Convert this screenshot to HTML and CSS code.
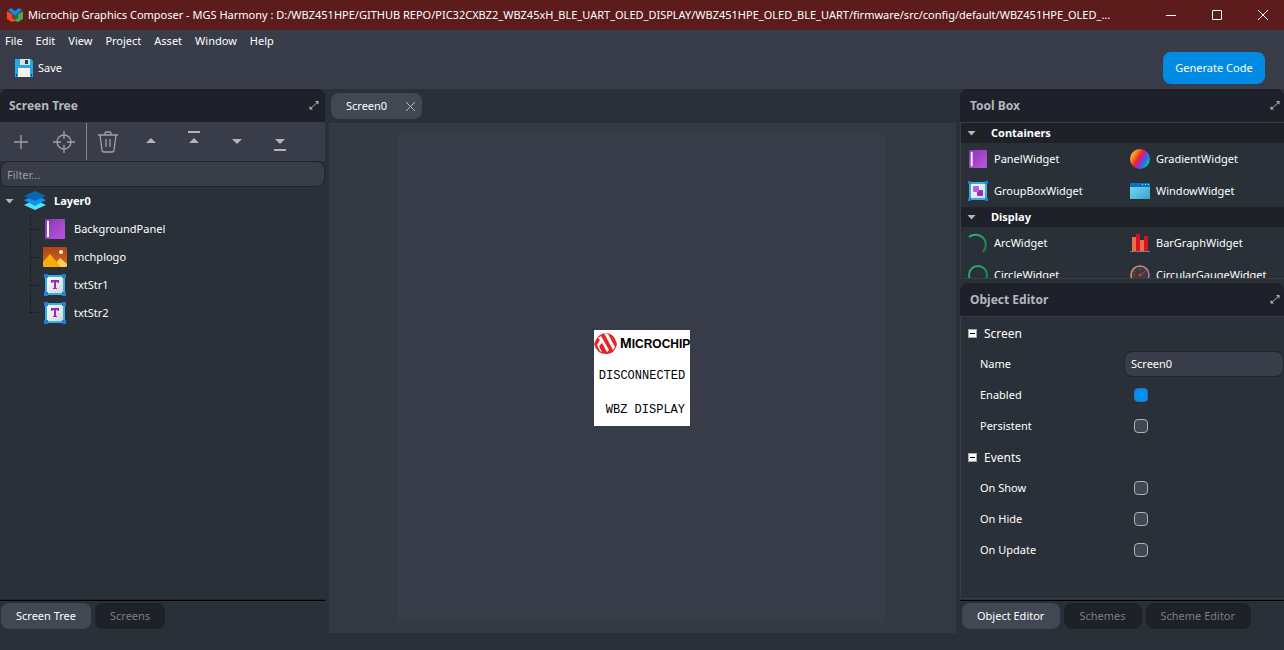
FILE: index.html
```html
<!DOCTYPE html>
<html lang="en">
<head>
<meta charset="utf-8">
<title>Microchip Graphics Composer</title>
<link rel="stylesheet" href="styles.css">
</head>
<body>
<svg class="defs" aria-hidden="true">
  <defs>
    <linearGradient id="purple" x1="0" y1="0" x2="1" y2="1"><stop offset="0" stop-color="#8a35b4"/><stop offset="1" stop-color="#bb55e0"/></linearGradient>
    <linearGradient id="paper" x1="0" y1="0" x2="1" y2="1"><stop offset="0" stop-color="#fff"/><stop offset="1" stop-color="#cfd2d4"/></linearGradient>
    <linearGradient id="rainbow" x1="0" y1="0.2" x2="1" y2="0.8"><stop offset="0.05" stop-color="#ffc51e"/><stop offset="0.25" stop-color="#fb7a1c"/><stop offset="0.42" stop-color="#ee2430"/><stop offset="0.58" stop-color="#a02ec4"/><stop offset="0.75" stop-color="#1878ee"/><stop offset="0.92" stop-color="#23b87c"/></linearGradient>
    <linearGradient id="sky" x1="0" y1="0" x2="1" y2="1"><stop offset="0" stop-color="#80dcf6"/><stop offset="1" stop-color="#35a4cc"/></linearGradient>
    <linearGradient id="rust" x1="0" y1="0" x2="0" y2="1"><stop offset="0" stop-color="#ae4415"/><stop offset="1" stop-color="#d06c1e"/></linearGradient>
    <linearGradient id="ring" x1="0" y1="0" x2="1" y2="0"><stop offset="0" stop-color="#f58a4c"/><stop offset="1" stop-color="#b87aa8"/></linearGradient>
    <linearGradient id="green" x1="0" y1="0" x2="1" y2="1"><stop offset="0" stop-color="#2bb673"/><stop offset="1" stop-color="#128040"/></linearGradient>
    <symbol id="i-panel" viewBox="0 0 20 20"><rect width="20" height="20" rx="1" fill="url(#purple)"/><rect x="2" y="2" width="2" height="16" fill="#fff"/></symbol>
    <symbol id="i-text" viewBox="0 0 22 22"><rect x="2" y="2" width="18" height="18" fill="url(#paper)" stroke="#2fb0e8" stroke-width="2"/><path d="M0 0h4v4H0zM18 0h4v4h-4zM0 18h4v4H0zM18 18h4v4h-4z" fill="#2f78d2"/><path d="M7 6h8v3h-1l-1-1h-1v6h1v1H9v-1h1V8H9L8 9H7z" fill="#9628c8"/></symbol>
    <symbol id="i-group" viewBox="0 0 20 20"><rect x="2" y="2" width="16" height="16" fill="url(#paper)" stroke="#2fb0e8" stroke-width="2"/><path d="M0 0h3v3H0zM17 0h3v3h-3zM0 17h3v3H0zM17 17h3v3h-3z" fill="#2f78d2"/><rect x="9" y="9" width="6" height="6" rx="1" fill="#9030bd"/><rect x="5" y="5" width="6" height="6" rx="1" fill="#bd5ce4"/></symbol>
    <symbol id="i-float" viewBox="0 0 10 10"><path d="m2 7 6-5" fill="none" stroke="#a6a9ae"/><path d="M6 0h3.500v3.500zM.5 5v3.500H4z" fill="#b0b3b8"/></symbol>
  </defs>
</svg>
<div class="app">
  <header class="titlebar">
    <svg class="logo" viewBox="0 0 16 14"><path d="M1 2 4 0l4 3 4-3 3 2-7 6z" fill="#1787ee"/><path d="M0 3l8 5v5l-3 1-5-3z" fill="#ee4b22"/><path d="M16 3 8 8v5l3 1 5-3z" fill="#44ad4e"/><path d="m5 6 3 2 3-2v4l-3 2-3-2z" fill="#202c2c" opacity=".55"/></svg>
    <h1 class="title">Microchip Graphics Composer - MGS Harmony : D:/WBZ451HPE/GITHUB REPO/PIC32CXBZ2_WBZ45xH_BLE_UART_OLED_DISPLAY/WBZ451HPE_OLED_BLE_UART/firmware/src/config/default/WBZ451HPE_OLED_...</h1>
    <div class="window-buttons">
      <button type="button" aria-label="Minimize"><svg viewBox="0 0 12 12"><path d="M1 6.500h10"/></svg></button>
      <button type="button" aria-label="Maximize"><svg viewBox="0 0 12 12"><rect x="1.500" y="1.500" width="9" height="9" rx=".5"/></svg></button>
      <button type="button" aria-label="Close"><svg viewBox="0 0 12 12"><path d="m1 1 10 10M11 1 1 11"/></svg></button>
    </div>
  </header>
  <nav class="menubar">
    <button type="button">File</button><button type="button">Edit</button><button type="button">View</button><button type="button">Project</button><button type="button">Asset</button><button type="button">Window</button><button type="button">Help</button>
  </nav>
  <div class="toolbar">
    <button type="button" class="save"><svg viewBox="0 0 18 18"><path d="M0 0h16l2 2v16H0z" fill="#27a9e6"/><path d="M5 0h10v6H5z" fill="#d9e2e8"/><path d="M10 1h3v4h-3z" fill="#1f3d55"/><path d="M3 9h12v9H3z" fill="#f2f2f2"/><path d="M1 15h1v2H1zM16 15h1v2h-1z" fill="#0d3f60"/></svg>Save</button>
    <button type="button" class="generate">Generate Code</button>
  </div>
  <main class="workspace">
    <section class="dock">
      <div class="dock-head left-head"><h2>Screen Tree</h2><button type="button" aria-label="Float"><svg><use href="#i-float"/></svg></button></div>
      <div class="tree-tools">
        <button type="button" aria-label="Add"><svg viewBox="0 0 24 24"><path d="M12 5v14M5 12h14"/></svg></button>
        <button type="button" aria-label="Locate" class="divided"><svg viewBox="0 0 24 24"><circle cx="12" cy="12" r="7"/><path d="M12 1v8M12 15v8M1 12h8M15 12h8"/></svg></button>
        <button type="button" aria-label="Delete"><svg viewBox="0 0 24 24"><path d="M2 5h20M4 5l2 15q0 2 2 2h8q2 0 2-2l2-15M9 5V3l1-1h4l1 1v2M10 9v8M14 9v8"/></svg></button>
        <button type="button" aria-label="Move up"><svg viewBox="0 0 24 24"><path class="solid" d="m7 13 5-5 5 5z"/></svg></button>
        <button type="button" aria-label="Move to top"><svg viewBox="0 0 24 24"><path class="solid" d="m7 13 5-5 5 5zM6 1h12v2H6z"/></svg></button>
        <button type="button" aria-label="Move down"><svg viewBox="0 0 24 24"><path class="solid" d="m7 9 5 5 5-5z"/></svg></button>
        <button type="button" aria-label="Move to bottom"><svg viewBox="0 0 24 24"><path class="solid" d="m7 9 5 5 5-5zM6 19h12v2H6z"/></svg></button>
      </div>
      <input class="filter" type="text" placeholder="Filter..." aria-label="Filter">
      <div class="tree">
        <div class="layer"><i class="arrow"></i><svg viewBox="0 0 22 20"><path d="m0 14 11-5 11 5-11 5z" fill="#4fe2fb"/><path d="m0 9 11-5 11 5-11 6z" fill="#0b93f2"/><path d="m0 5 11-5 11 5-11 5z" fill="#0868ad"/></svg><strong>Layer0</strong></div>
        <ul>
          <li><svg class="i20"><use href="#i-panel"/></svg>BackgroundPanel</li>
          <li><svg class="i24" viewBox="0 0 24 20"><rect width="24" height="20" rx="1" fill="url(#rust)"/><path d="m11 18 6-7 7 6v2l-1 1H11z" fill="#ffd152"/><path d="m0 15 7-8 11 13H1l-1-1z" fill="#f9ad09"/><circle cx="18" cy="5" r="2" fill="#fff3d6"/></svg>mchplogo</li>
          <li><svg class="i22"><use href="#i-text"/></svg>txtStr1</li>
          <li><svg class="i22"><use href="#i-text"/></svg>txtStr2</li>
        </ul>
      </div>
      <div class="tabs"><button type="button" class="active">Screen Tree</button><button type="button">Screens</button></div>
    </section>

    <section class="editor">
      <div class="editor-tabs"><div class="editor-tab"><span>Screen0</span><button type="button" aria-label="Close Screen0"><svg viewBox="0 0 9 9"><path d="m0 0 9 9M9 0 0 9"/></svg></button></div></div>
      <div class="stage"><div class="canvas"><div class="oled">
        <svg viewBox="0 0 96 28" role="img" aria-label="Microchip"><path d="M0 14Q4 3 12 3t11 11q-2 10-11 10Q3 24 0 14z" fill="#e42526"/><path d="m4 8 3-2 8 14-2 2-5-9-3 3 3 6-2-1-3-6 3-5zM10 3l4 1 7 13-2 3z" fill="#fff"/><text x="26" y="18" class="brand"><tspan class="cap">M</tspan>ICROCHIP</text></svg>
        <p>DISCONNECTED</p><p class="end">WBZ DISPLAY</p>
      </div></div></div>
    </section>

    <section class="dock">
      <div class="dock-head"><h2>Tool Box</h2><button type="button" aria-label="Float"><svg><use href="#i-float"/></svg></button></div>
      <div class="toolbox">
        <h3><i class="arrow"></i>Containers</h3>
        <div class="widgets">
          <div><svg><use href="#i-panel" x="1" y="1" width="18" height="18"/></svg>PanelWidget</div>
          <div><svg viewBox="0 0 20 20"><circle cx="10" cy="10" r="10" fill="url(#rainbow)"/></svg>GradientWidget</div>
          <div><svg><use href="#i-group"/></svg>GroupBoxWidget</div>
          <div><svg viewBox="0 0 20 20"><path d="M0 2h20v16H0z" fill="url(#sky)"/><path d="M0 2h20v4H0z" fill="#0873c6"/><path d="M12 3h1v1h-1zM15 3h1v1h-1zM18 3h1v1h-1z" fill="#a8dcf8"/></svg>WindowWidget</div>
        </div>
        <h3><i class="arrow"></i>Display</h3>
        <div class="widgets">
          <div><svg viewBox="0 0 20 20"><path d="M1 4q4-3 9-2c8 2 10 11 5 17" fill="none" stroke="url(#green)" stroke-width="2"/></svg>ArcWidget</div>
          <div><svg viewBox="0 0 20 20"><path d="M2 4h4v14H2zM10 7h4v11h-4z" fill="#ef6c45"/><path d="M6 1h4v17H6zM14 3h4v15h-4z" fill="#d01524"/><path d="M0 18h20v1H0z" fill="#76808c"/></svg>BarGraphWidget</div>
          <div><svg viewBox="0 0 20 20"><circle cx="10" cy="10" r="9" fill="none" stroke="url(#green)" stroke-width="2"/></svg>CircleWidget</div>
          <div><svg viewBox="0 0 20 20"><circle cx="10" cy="10" r="9" fill="#3b3b40" stroke="url(#ring)" stroke-width="1.500"/><path d="m10 10 6-4" stroke="#d8382e"/><circle cx="10" cy="10" r="1.500" fill="#e23030"/><path d="M10 3v2M4 6l1 1M3 10h2M15 5l1-1" stroke="#626268"/></svg>CircularGaugeWidget</div>
        </div>
      </div>
      <div class="dock-head"><h2>Object Editor</h2><button type="button" aria-label="Float"><svg><use href="#i-float"/></svg></button></div>
      <form class="properties">
        <h3><i class="minus"></i>Screen</h3>
        <div class="prop"><label for="name">Name</label><input id="name" type="text" value="Screen0"></div>
        <div class="prop"><label for="enabled">Enabled</label><input id="enabled" type="checkbox" checked></div>
        <div class="prop"><label for="persistent">Persistent</label><input id="persistent" type="checkbox"></div>
        <h3><i class="minus"></i>Events</h3>
        <div class="prop"><label for="show">On Show</label><input id="show" type="checkbox"></div>
        <div class="prop"><label for="hide">On Hide</label><input id="hide" type="checkbox"></div>
        <div class="prop"><label for="update">On Update</label><input id="update" type="checkbox"></div>
      </form>
      <div class="tabs right-tabs"><button type="button" class="active">Object Editor</button><button type="button">Schemes</button><button type="button">Scheme Editor</button></div>
    </section>
  </main>
</div>
</body>
</html>
```
FILE: styles.css
```css
* { box-sizing: border-box; }
body { margin: 0; background: #2a3037; color: #fff; font: 11px/16px "Noto Sans", "Open Sans", sans-serif; }
button { padding: 0; border: 0; background: none; color: inherit; font: inherit; display: flex; align-items: center; justify-content: center; }
svg { display: block; flex: none; }
h1, h2, h3, p, ul { margin: 0; padding: 0; font: inherit; }
.defs { position: absolute; width: 0; height: 0; }
.app { min-height: 100vh; display: flex; flex-direction: column; padding-bottom: 17px; }

.titlebar { height: 30px; display: flex; align-items: center; background: #5c1c1c; padding-left: 7px; }
.logo { width: 16px; height: 14px; }
.title { flex: 1; min-width: 0; margin-left: 5px; white-space: nowrap; }
.window-buttons { display: flex; gap: 34px; padding-right: 15px; }
.window-buttons button { height: 30px; }
.window-buttons svg { width: 12px; height: 12px; fill: none; stroke: #fff; }

.menubar { display: flex; gap: 13px; height: 22px; align-items: center; padding-left: 5px; background: #383d49; }
.toolbar { height: 37px; display: flex; justify-content: space-between; align-items: flex-start; padding: 0 19px 0 15px; background: #383d49; }
.save { gap: 5px; height: 32px; }
.save svg { width: 18px; height: 18px; }
.generate { width: 102px; height: 32px; border-radius: 8px; background: #008ce4; }

.workspace { flex: 1; display: grid; grid-template-columns: 325px minmax(0, 1fr) 324px; column-gap: 4px; }
.dock { display: flex; flex-direction: column; min-width: 0; }
.dock-head { height: 33px; display: flex; align-items: center; justify-content: space-between; padding: 0 4px 0 10px; background: #1e2129; border-radius: 8px 8px 0 0; color: #b4b8bd; }
.left-head { padding: 0 6px 0 9px; }
.dock-head h2 { font-size: 12px; font-weight: 700; }
.dock-head svg { width: 10px; height: 10px; }

.tree-tools { height: 39px; display: flex; background: #383d49; }
.tree-tools button { width: 43px; height: 37px; margin-top: 1px; padding-right: 2px; }
.tree-tools .divided { width: 44px; border-right: 1px solid #85888e; }
.tree-tools svg { width: 24px; height: 24px; fill: none; stroke: #a0a2a7; stroke-width: 1.3; }
.tree-tools .solid { fill: #b2b4b7; stroke: none; }
.filter { height: 26px; padding: 0 6px; border: 1px solid #20242b; border-radius: 8px; background: #383d49; color: #fff; font: inherit; }
.filter::placeholder { color: #9a9ca2; opacity: 1; }

.arrow { width: 9px; height: 5px; background: #b4b6ba; clip-path: polygon(0 0, 100% 0, 50% 100%); }
.tree { flex: 1; border-bottom: 1px solid #20242a; }
.layer { height: 28px; display: flex; align-items: center; padding-left: 5px; }
.layer svg { width: 22px; height: 20px; margin: 0 8px 0 10px; }
.tree ul { list-style: none; margin-left: 30px; }
.tree li { height: 28px; display: grid; grid-template-columns: 10px 34px auto; justify-content: start; align-items: center; }
.tree li::before { content: ""; width: 10px; height: 28px; border-left: 1px dotted #14171b; background: repeating-linear-gradient(90deg, #14171b 0 1px, transparent 1px 2px) 0 14px / 10px 1px no-repeat; }
.tree li:last-child::before { height: 14px; align-self: start; background-position: 0 13px; }
.tree li svg { justify-self: center; margin-right: 4px; }
.i20 { width: 20px; height: 20px; }
.i22 { width: 22px; height: 22px; }
.i24 { width: 24px; height: 20px; }

.tabs { display: flex; gap: 4px; height: 33px; padding: 2px 1px 4px; border-top: 1px solid #000; }
.right-tabs { padding-left: 2px; }
.tabs button { padding: 0 15px; border-radius: 8px; background: #1e2128; color: #777e8b; white-space: nowrap; }
.right-tabs button { padding: 0 16px 0 15px; }
.tabs .active { background: #424754; color: #fff; }

.editor { display: flex; flex-direction: column; min-width: 0; }
.editor-tabs { height: 34px; padding: 4px 2px; display: flex; }
.editor-tab { display: flex; align-items: center; gap: 19px; padding: 0 7px 0 15px; border-radius: 8px; background: #424754; }
.editor-tab svg { width: 9px; height: 9px; stroke: #b7bac0; }
.stage { flex: 1; display: grid; place-items: center; padding: 11px 12px 11px 11px; background: #343a43; }
.canvas { height: 100%; aspect-ratio: 1; display: grid; place-items: center; background: #373c48; }
.oled { width: 96px; height: 96px; background: #fff; color: #000; font: 12px/14px "Liberation Mono", monospace; text-align: center; }
.oled svg { width: 96px; height: 28px; }
.brand { font: 700 12px "Liberation Sans", sans-serif; }
.cap { font-size: 14px; }
.oled p { margin-top: 11px; }
.oled .end { margin-top: 20px; text-align: right; padding-right: 5px; }

.toolbox { height: 157px; overflow: hidden; border: 1px solid #383e45; border-right: 0; margin-bottom: 4px; }
.toolbox h3 { height: 20px; display: flex; align-items: center; gap: 15px; padding-left: 6px; background: #1e2128; font-weight: 700; }
.widgets { display: grid; grid-template-columns: 1fr 154px; padding-left: 7px; }
.widgets div { height: 32px; display: flex; align-items: center; gap: 6px; white-space: nowrap; }
.widgets svg { width: 20px; height: 20px; }
.properties { flex: 1; border: 1px solid #383e45; border-right: 0; margin-bottom: 1px; }
.properties h3 { height: 31px; display: flex; align-items: center; gap: 7px; padding: 2px 0 0 7px; font-size: 12px; }
.minus { width: 9px; height: 9px; border: 1px solid #a8a8a8; background: linear-gradient(#000, #000) center / 5px 1px no-repeat #fff; }
.prop { height: 31px; display: grid; grid-template-columns: 144px 1fr; align-items: center; padding-left: 19px; }
.prop [type="text"] { width: 100%; height: 26px; border: 1px solid #20242b; border-radius: 8px; padding: 0 6px; background: #383d49; color: #fff; font: inherit; }
.prop [type="checkbox"] { appearance: none; width: 14px; height: 14px; margin: 0 10px; border: 1px solid #b0b2b6; border-radius: 4px; background: #424754; }
.prop [type="checkbox"]:checked { background: #0091f2; border-color: #2477b2; }
```
